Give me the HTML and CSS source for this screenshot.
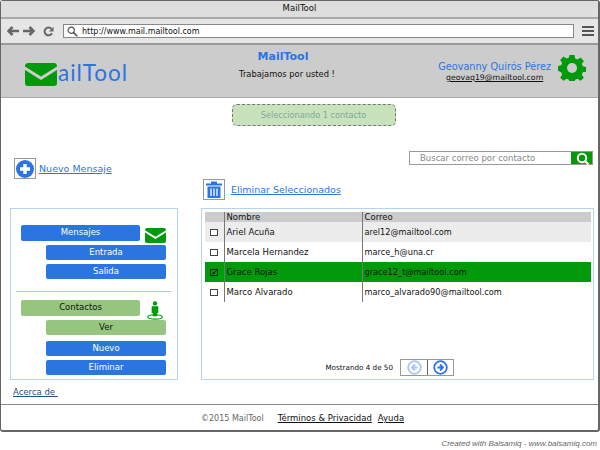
FILE: index.html
```html
<!DOCTYPE html>
<html lang="en">
<head>
  <meta charset="UTF-8" />
  <meta name="viewport" content="width=device-width, initial-scale=1" />
  <title>MailTool</title>
  <link rel="stylesheet" href="styles.css">
</head>
<body>
  <div class="window">
    <div class="title-bar">MailTool</div>

    <div class="toolbar">
      <svg class="nav-icon" width="12" height="10" viewBox="0 0 12 10"><path d="M5.500 1 1.500 5l4 4M2 5h10" fill="none" stroke="#666" stroke-width="2.600"/></svg>
      <svg class="nav-icon" width="12" height="10" viewBox="0 0 12 10"><path d="m6.500 1 4 4-4 4M10 5H0" fill="none" stroke="#666" stroke-width="2.600"/></svg>
      <svg class="nav-icon" width="11" height="11" viewBox="0 0 13 13"><path d="M10.600 8.500A4.600 4.600 0 1 1 10 3.400" fill="none" stroke="#666" stroke-width="2.400"/><path d="M12.500 1v5.500H7z" fill="#666"/></svg>
      <div class="address">
        <svg width="11" height="11" viewBox="0 0 12 12"><circle cx="4.600" cy="4.600" r="3.400" fill="none" stroke="#555" stroke-width="1.300"/><path d="m7.200 7.200 4 4" stroke="#555" stroke-width="1.800"/></svg>
        <span>http://www.mail.mailtool.com</span>
      </div>
      <div class="burger"><i></i><i></i><i></i></div>
    </div>

    <header class="app-header">
      <div class="logo">
        <svg width="32" height="23" viewBox="0 0 32 23"><use href="#envelope"/></svg>
        <span>ailTool</span>
      </div>
      <div class="brand">
        <h1>MailTool</h1>
        <p>Trabajamos por usted !</p>
      </div>
      <div class="user">
        <div class="user-info">
          <div class="user-name">Geovanny Quirós Pérez</div>
          <a href="#" class="user-mail">geovaq19@mailtool.com</a>
        </div>
        <svg class="gear" width="28" height="26" viewBox="0 0 28 26"><path d="M11.500 0h5l.6 3.600 2.400 1 3-2.100 3.400 3.400-2.100 3 1 2.400 3.200.6v4.800l-3.200.6-1 2.400 2.100 3-3.400 3.100-3-2-2.400 1-.6 3.100h-5l-.6-3.100-2.400-1-3 2-3.400-3.100 2.100-3-1-2.400L0 15.700v-4.800l3.200-.6 1-2.400-2.100-3 3.400-3.400 3 2.100 2.400-1z" fill="#009a0b"/><circle cx="14" cy="13" r="5" fill="#ccc"/></svg>
      </div>
    </header>

    <main class="content">
      <div class="notice">Seleccionando 1 contacto</div>

      <a href="#" class="action action-new">
        <span class="icon-box">
          <svg width="18" height="18" viewBox="0 0 18 18"><circle cx="9" cy="9" r="9" fill="#2a75e0"/><path d="M9 4v10M4 9h10" stroke="#fff" stroke-width="3.400"/></svg>
        </span>
        Nuevo Mensaje
      </a>

      <div class="right-tools">
        <div class="search">
          <span class="search-text">Buscar correo por contacto</span>
          <span class="search-btn">
            <svg width="16" height="13" viewBox="0 0 16 13"><circle cx="8" cy="6" r="4.200" fill="none" stroke="#fff" stroke-width="2"/><path d="m11 9 3.500 3.500" stroke="#fff" stroke-width="2.400"/></svg>
          </span>
        </div>
        <a href="#" class="action action-delete">
          <span class="icon-box">
            <svg width="16" height="17" viewBox="0 0 16 17"><path d="M0 2.500h16v2H0zM5 2.500V.6h6v1.900" fill="#2a75e0"/><path d="M1.500 5.500h13V17h-13z" fill="#2a75e0"/><path d="M5 7.500v7.500M8 7.500v7.500M11 7.500v7.500" stroke="#fff" stroke-width="1.300"/></svg>
          </span>
          Eliminar Seleccionados
        </a>
      </div>

      <aside class="side-panel">
        <div class="menu-row">
          <div class="btn btn-blue btn-head">Mensajes</div>
          <svg width="21" height="15" viewBox="0 0 32 23" preserveAspectRatio="none"><use href="#envelope"/></svg>
        </div>
        <div class="btn btn-blue btn-sub">Entrada</div>
        <div class="btn btn-blue btn-sub">Salida</div>
        <hr class="side-rule">
        <div class="menu-row">
          <div class="btn btn-green btn-head">Contactos</div>
          <svg class="person" width="18" height="19" viewBox="0 0 18 20"><circle cx="9" cy="2.500" r="2.300" fill="#009a0b"/><path d="M5.500 5.500h7v7h-1.200V16H6.700v-3.500H5.500z" fill="#009a0b"/><ellipse cx="9" cy="16.800" rx="7.700" ry="2.300" fill="none" stroke="#009a0b" stroke-width="1.200"/></svg>
        </div>
        <div class="btn btn-green btn-sub">Ver</div>
        <div class="btn btn-blue btn-sub btn-gap">Nuevo</div>
        <div class="btn btn-blue btn-sub">Eliminar</div>
      </aside>

      <section class="table-panel">
        <table class="mail-table">
          <thead>
            <tr><th class="col-check"></th><th class="col-name">Nombre</th><th>Correo</th></tr>
          </thead>
          <tbody>
            <tr class="row-alt"><td class="col-check"><span class="check"></span></td><td>Ariel Acuña</td><td class="col-mail">arel12@mailtool.com</td></tr>
            <tr><td class="col-check"><span class="check"></span></td><td>Marcela Hernandez</td><td class="col-mail">marce_h@una.cr</td></tr>
            <tr class="row-selected"><td class="col-check"><span class="check">&#10003;</span></td><td>Grace Rojas</td><td class="col-mail">grace12_t@mailtool.com</td></tr>
            <tr><td class="col-check"><span class="check"></span></td><td>Marco Alvarado</td><td class="col-mail">marco_alvarado90@mailtool.com</td></tr>
          </tbody>
        </table>
        <div class="pager">
          <span>Mostrando 4 de 50</span>
          <div class="pager-btns">
            <span class="pager-btn">
              <svg width="15" height="15" viewBox="0 0 15 15"><circle cx="7.500" cy="7.500" r="6.300" fill="none" stroke="#a5c6f4" stroke-width="1.800"/><path d="M8 4.500 5 7.500l3 3M5 7.500h5.500" fill="none" stroke="#a5c6f4" stroke-width="1.800"/></svg>
            </span>
            <span class="pager-btn">
              <svg width="15" height="15" viewBox="0 0 15 15"><circle cx="7.500" cy="7.500" r="6.300" fill="none" stroke="#2a75e0" stroke-width="1.800"/><path d="m7 4.500 3 3-3 3M10 7.500H4.500" fill="none" stroke="#2a75e0" stroke-width="1.800"/></svg>
            </span>
          </div>
        </div>
      </section>

      <a href="#" class="about">Acerca de&nbsp;</a>
    </main>

    <footer class="app-footer">
      <span class="copy">©2015 MailTool</span>
      <a href="#">Términos &amp; Privacidad</a>
      <a href="#">Ayuda</a>
    </footer>
  </div>

  <div class="credit">Created with Balsamiq - www.balsamiq.com</div>

  <svg class="defs" width="0" height="0">
    <symbol id="envelope" viewBox="0 0 32 23">
      <path d="M0 3.500 Q0 0 3 0H29Q32 0 32 3.500L16 13.500z" fill="#009a0b"/>
      <path d="M0 7 16 17 32 7V20Q32 23 29 23H3Q0 23 0 20z" fill="#009a0b"/>
    </symbol>
  </svg>
</body>
</html>
```

FILE: styles.css
```css
* {
  box-sizing: border-box;
  margin: 0;
  padding: 0;
  font-family: "DejaVu Sans", sans-serif;
}
body {
  background: #fff;
  color: #111;
  font-size: 8.5px;
  width: 600px;
  height: 450px;
  overflow: hidden;
}
a {
  color: inherit;
}
.defs {
  display: block;
}
.window {
  height: 432px;
  border: 1px solid #666;
  border-width: 1px 2px 2px 1px;
  border-radius: 3px;
  display: flex;
  flex-direction: column;
}
.title-bar {
  height: 18px;
  background: #dedede;
  border-bottom: 2px solid #aaa;
  text-align: center;
  line-height: 15px;
}
.toolbar {
  height: 26px;
  background: #e6e6e6;
  border-bottom: 2px solid #999;
  display: flex;
  align-items: center;
  padding: 0 3px 0 6px;
  gap: 4px;
}
.nav-icon + .nav-icon + .nav-icon {
  margin-left: 4px;
}
.address {
  flex-grow: 1;
  height: 14px;
  margin: 0 4px 0 5px;
  background: #fff;
  border: 1px solid #888;
  display: flex;
  align-items: center;
  gap: 4px;
  padding-left: 3px;
  font-size: 8px;
}
.burger {
  width: 12px;
  display: flex;
  flex-direction: column;
  gap: 2px;
  margin-right: 1px;
}
.burger i {
  display: block;
  height: 2px;
  background: #555;
}
.app-header {
  height: 53px;
  background: #ccc;
  border-bottom: 1px solid #aaa;
  display: grid;
  grid-template-columns: 210px 134px 1fr;
  align-items: center;
}
.logo {
  display: flex;
  align-items: flex-end;
  margin-left: 24px;
  margin-top: 4px;
  color: #2a75e0;
  font-size: 22.500px;
  letter-spacing: 1px;
  line-height: 23px;
  gap: 1px;
}
.logo span {
  font-family: "Lato", sans-serif;
  margin-bottom: 2px;
}
.brand {
  text-align: center;
  align-self: start;
  margin-left: 10px;
}
.brand h1 {
  color: #2a75e0;
  font-size: 11px;
  font-weight: bold;
  margin-top: 5px;
  line-height: 13px;
}
.brand p {
  margin-top: 6px;
  padding-left: 8px;
  font-size: 8.300px;
}
.user {
  display: flex;
  justify-content: flex-end;
  align-items: center;
  gap: 7px;
  padding-right: 12px;
}
.user-info {
  text-align: center;
  margin-top: 1px;
}
.user-name {
  color: #2a75e0;
  font-size: 9.700px;
}
.user-mail {
  display: block;
  margin-top: 1px;
  font-size: 7.800px;
}
.gear {
  margin-bottom: 6px;
}
.content {
  flex-grow: 1;
  display: grid;
  grid-template-columns: 168px 393px;
  grid-template-rows: 54px 50px 172px auto;
  column-gap: 23px;
  padding: 6px 0 0 9px;
}
.notice {
  grid-column: 1 / 3;
  justify-self: center;
  margin-left: 23px;
  width: 164px;
  height: 22px;
  background: #c8e2bb;
  border: 1px dashed #777;
  border-radius: 5px;
  color: #7fa89f;
  text-align: center;
  line-height: 20px;
  font-size: 8.200px;
}
.action {
  display: flex;
  align-items: center;
  color: #2a75e0;
  font-size: 9.500px;
}
.action-new {
  align-self: start;
  margin-left: 4px;
  width: max-content;
  gap: 3px;
}
.icon-box {
  width: 22px;
  height: 21px;
  border: 1px solid #999;
  background: #fff;
  display: flex;
  align-items: center;
  justify-content: center;
}
.right-tools {
  margin-top: -7px;
  display: flex;
  flex-direction: column;
}
.search {
  align-self: flex-end;
  width: 184px;
  height: 14px;
  margin-right: 1px;
  display: flex;
  border: 1px solid #999;
  color: #888;
  line-height: 12px;
}
.search-text {
  flex-grow: 1;
  padding-left: 10px;
}
.search-btn {
  width: 21px;
  background: #009a0b;
  display: flex;
  align-items: center;
  justify-content: center;
}
.action-delete {
  margin-top: 14px;
  margin-left: 2px;
  width: max-content;
  gap: 6px;
}
.side-panel {
  border: 1px solid #b5d3f2;
  padding: 16px 11px 0 10px;
  display: flex;
  flex-direction: column;
}
.menu-row {
  display: flex;
  justify-content: space-between;
  align-items: center;
}
.btn {
  height: 16px;
  border-radius: 2px;
  text-align: center;
  line-height: 15px;
  margin-bottom: 4px;
}
.btn-blue {
  background: #2a75e0;
  color: #fff;
}
.btn-green {
  background: #96c57f;
  color: #111;
}
.btn-head {
  width: 119px;
}
.btn-sub {
  margin-left: 25px;
}
.btn-gap {
  margin-top: 2px;
}
.person {
  margin: 0 2px 0 0;
}
.side-rule {
  border: 0;
  border-top: 1px solid #a8cbef;
  margin: 8px -5px 8px;
}
.table-panel {
  border: 1px solid #b5d3f2;
  padding: 3px 2px 0 3px;
  display: flex;
  flex-direction: column;
}
.mail-table {
  width: 100%;
  border-collapse: collapse;
}
.mail-table th {
  height: 10px;
  background: #ccc;
  text-align: left;
  font-weight: normal;
  line-height: 10px;
  padding-left: 2px;
}
.mail-table td {
  height: 20px;
  padding-left: 2px;
}
.mail-table th + th,
.mail-table td + td {
  border-left: 1px solid #777;
}
.mail-table .col-mail {
  font-size: 8.200px;
}
.col-check {
  width: 19px;
}
.col-name {
  width: 138px;
}
.mail-table .col-check {
  text-align: center;
  padding-left: 0;
}
.row-alt {
  background: #ececec;
}
.row-selected {
  background: #009a0b;
}
.check {
  display: inline-block;
  width: 8px;
  height: 7px;
  border: 1px solid #444;
  background: #fff;
  vertical-align: middle;
  line-height: 5px;
  font-size: 9px;
}
.row-selected .check {
  background: transparent;
  border-color: #111;
}
.pager {
  display: flex;
  justify-content: flex-end;
  align-items: center;
  gap: 7px;
  margin-top: auto;
  padding: 0 137px 3px 0;
  font-size: 7.200px;
}
.pager-btns {
  display: flex;
  border: 1px solid #999;
}
.pager-btn {
  width: 26px;
  height: 15px;
  display: flex;
  align-items: center;
  justify-content: center;
}
.pager-btn + .pager-btn {
  border-left: 1px solid #666;
}
.about {
  grid-column: 1;
  margin: 7px 0 0 3px;
  color: #1d4f8c;
  width: max-content;
}
.app-footer {
  height: 26px;
  border-top: 1px solid #888;
  display: flex;
  align-items: center;
  padding: 1px 0 0 200px;
  gap: 6px;
  font-size: 8.500px;
}
.copy {
  color: #666;
  font-size: 8px;
  margin-right: 8px;
}
.credit {
  text-align: right;
  color: #666;
  font-family: "Liberation Sans", sans-serif;
  font-style: italic;
  font-size: 8px;
  padding: 7px 3px 0 0;
}
```
